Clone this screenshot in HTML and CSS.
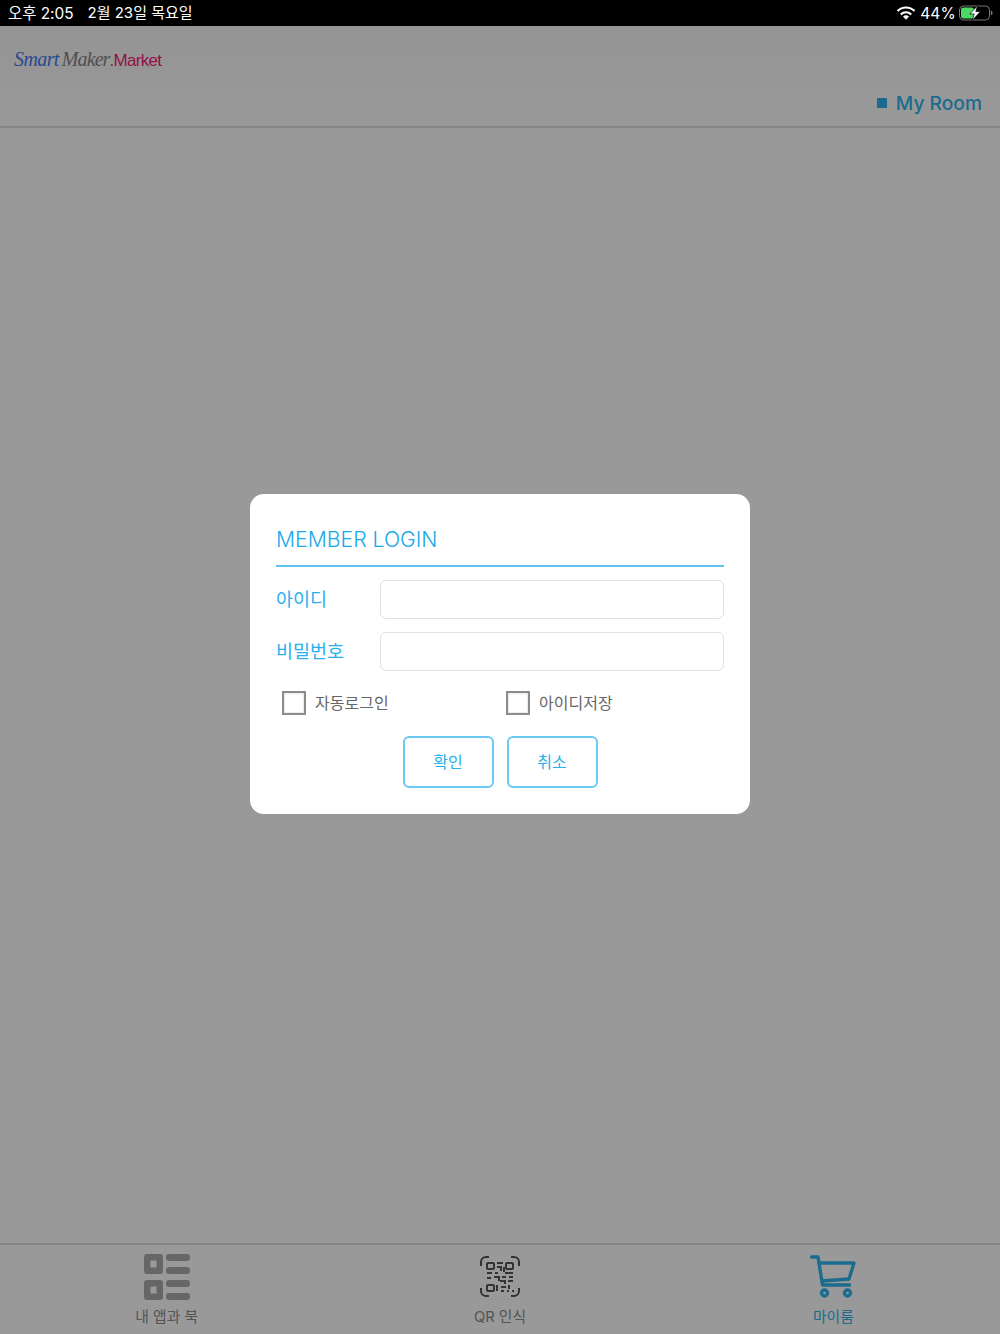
FILE: index.html
```html
<!DOCTYPE html>
<html lang="ko">
<head>
<meta charset="utf-8">
<title>Member Login</title>
<link rel="stylesheet" href="styles.css">
</head>
<body>
<div class="app">
  <div class="status">
    <div class="status-left"><span class="clock">오후 2:05</span><span>2월 23일 목요일</span></div>
    <div class="status-right">
      <svg class="wifi" width="20" height="14" viewBox="0 0 20 14"><path d="M10 13.800 7 10.600a4.300 4.300 0 0 1 6 0Z" fill="#fff"/><path d="M4.800 8.400a7.300 7.300 0 0 1 10.400 0" fill="none" stroke="#fff" stroke-width="2.100"/><path d="M1.500 5a12 12 0 0 1 17 0" fill="none" stroke="#fff" stroke-width="2.100"/></svg>
      <span class="pct">44%</span>
      <svg width="34" height="16" viewBox="0 0 34 16"><rect x=".5" y="1" width="30" height="14" rx="4" fill="none" stroke="#777"/><rect x="2" y="2.500" width="13" height="11" rx="2.500" fill="#4cd964"/><path d="M31.800 5.600c1.200.3 1.700 1.200 1.700 2.400s-.5 2.100-1.700 2.400Z" fill="#777"/><path d="M18.600 .6 10.800 9h4.400l-2 6.600L21.400 6.600h-4.600Z" fill="#fff" stroke="#000" stroke-width=".7"/></svg>
    </div>
  </div>
  <header class="header">
    <div class="logo"><span class="logo-smart">Smart</span><span class="logo-maker">Maker</span><span class="logo-market">.Market</span></div>
    <div class="myroom"><span class="square"></span><span>My Room</span></div>
  </header>
  <main class="content"></main>
  <nav class="tabbar">
    <div class="tab">
      <svg width="46" height="46" viewBox="0 0 46 46"><g fill="#ababab"><path fill-rule="evenodd" d="M3 0h13a3 3 0 0 1 3 3v14a3 3 0 0 1-3 3H3a3 3 0 0 1-3-3V3a3 3 0 0 1 3-3Zm3.500 6.500v7h6v-7Z"/><path fill-rule="evenodd" d="M3 26h13a3 3 0 0 1 3 3v14a3 3 0 0 1-3 3H3a3 3 0 0 1-3-3V29a3 3 0 0 1 3-3Zm3.500 6.500v7h6v-7Z"/><rect x="22" y="0" width="24" height="7" rx="3"/><rect x="22" y="13" width="24" height="7" rx="3"/><rect x="22" y="26" width="24" height="7" rx="3"/><rect x="22" y="39" width="24" height="7" rx="3"/></g></svg>
      <span class="tab-label">내 앱과 북</span>
    </div>
    <div class="tab">
      <svg width="46" height="46" viewBox="0 0 46 46"><g fill="none" stroke="#555" stroke-width="2"><path d="M4 12V8a5 5 0 0 1 5-5h3M34 3h3a5 5 0 0 1 5 5v4M42 34v3a5 5 0 0 1-5 5h-3M12 42H9a5 5 0 0 1-5-5v-3"/><rect x="10" y="9" width="7" height="6" rx="1"/><rect x="29" y="9" width="7" height="6" rx="1"/><rect x="10" y="31" width="7" height="6" rx="1"/><path d="M20 9h6M20 13h4v4M27 13v5M10 19h5M18 19h3M28 19h8M10 24h4M17 23h5v4M25 23h4M32 23h4M23 27h5v3M31 27h5M20 31v6M24 33h5M32 31v4M24 37h3M30 37h2M35 37h2"/></g></svg>
      <span class="tab-label">QR 인식</span>
    </div>
    <div class="tab tab-active">
      <svg width="46" height="46" viewBox="0 0 46 46"><g fill="none" stroke="#2db4ee" stroke-width="3.400" stroke-linecap="round" stroke-linejoin="round"><path d="M1.500 3H8l4.500 28h27"/><path d="M9.500 9H44l-5 16-27 2"/></g><g fill="none" stroke="#2db4ee" stroke-width="3.400"><circle cx="14.500" cy="39" r="3"/><circle cx="37.500" cy="39" r="3"/></g></svg>
      <span class="tab-label">마이룸</span>
    </div>
  </nav>
</div>
<div class="overlay">
  <form class="modal">
    <h1 class="modal-title">MEMBER LOGIN</h1>
    <div class="rows">
      <label class="row"><span class="row-label">아이디</span><input class="field" type="text"></label>
      <label class="row"><span class="row-label">비밀번호</span><input class="field" type="password"></label>
    </div>
    <div class="checks">
      <label class="check"><span class="box"></span><span>자동로그인</span></label>
      <label class="check"><span class="box"></span><span>아이디저장</span></label>
    </div>
    <div class="actions">
      <button class="btn" type="button">확인</button>
      <button class="btn" type="button">취소</button>
    </div>
  </form>
</div>
</body>
</html>
```
FILE: styles.css
```css
* { box-sizing: border-box; }
html, body { margin: 0; height: 100%; }
body {
  font-family: Inter, "Noto Sans CJK KR", sans-serif;
  background: #fff;
  overflow: hidden;
}
.app {
  height: 1334px;
  display: flex;
  flex-direction: column;
}
.status {
  height: 26px;
  flex: none;
  padding: 0 8px 3px;
  display: flex;
  align-items: center;
  justify-content: space-between;
  background: #000;
  color: #fff;
  font-size: 15px;
  position: relative;
  z-index: 2;
}
.status-left { display: flex; align-items: center; gap: 14px; }
.clock { font-size: 15.400px; }
.status-right {
  align-self: stretch;
  display: flex;
  align-items: center;
  gap: 5px;
  margin: 0 -1px -3px 0;
}
.wifi { margin-right: -1px; }
.pct { font-size: 15.500px; letter-spacing: .2px; margin-right: -2px; }
.header {
  height: 102px;
  flex: none;
  background: linear-gradient(#f8f8f8, #ffffff);
  border-bottom: 2px solid #e0e0e0;
  display: flex;
  flex-direction: column;
  justify-content: space-between;
  padding: 22px 18px 10px 14px;
}
.logo {
  display: flex;
  align-items: baseline;
  height: 27px;
}
.logo-smart {
  font-family: "Liberation Serif", serif;
  font-style: italic;
  color: #4678f0;
  font-size: 20px;
  letter-spacing: -.6px;
  margin-right: 3px;
}
.logo-maker {
  font-family: "Liberation Serif", serif;
  font-style: italic;
  color: #848484;
  font-size: 20px;
  letter-spacing: -.9px;
}
.logo-market {
  font-family: "Liberation Sans", sans-serif;
  color: #f51a78;
  font-size: 17px;
  letter-spacing: -.7px;
}
.myroom {
  align-self: flex-end;
  display: flex;
  align-items: center;
  gap: 9px;
  color: #2fb3ee;
  font-size: 19.200px;
  font-weight: 500;
  line-height: 26px;
}
.square { width: 10px; height: 10px; background: #2fb3ee; }
.content { flex: 1; background: #fff; }
.tabbar {
  height: 91px;
  flex: none;
  display: grid;
  grid-template-columns: repeat(3, 1fr);
  background: #fff;
  border-top: 2px solid #e0e0e0;
}
.tab {
  display: flex;
  flex-direction: column;
  align-items: center;
  padding-top: 9px;
  gap: 7px;
  color: #8c8c8c;
}
.tab-label { font-size: 14.800px; line-height: 20px; font-weight: 400; }
.tab-active { color: #2fb3ee; }
.overlay {
  position: absolute;
  inset: 26px 0 0 0;
  background: rgba(0, 0, 0, .4);
  display: flex;
  align-items: flex-start;
  justify-content: center;
  padding-top: 468px;
}
.modal {
  width: 500px;
  height: 320px;
  background: #fff;
  border-radius: 14px;
  padding: 29px 26px 0;
  margin: 0;
}
.modal-title {
  margin: 0;
  height: 44px;
  font-size: 21.200px;
  font-weight: 350;
  line-height: 33px;
  color: #1aa9eb;
  border-bottom: 2px solid #5cc3f1;
}
.rows {
  margin-top: 13px;
  display: flex;
  flex-direction: column;
  gap: 13px;
}
.row { display: flex; align-items: center; }
.row-label {
  width: 104px;
  flex: none;
  font-size: 18.500px;
  font-weight: 400;
  line-height: 38px;
  height: 39px;
  color: #29b0ec;
}
.field {
  flex: 1;
  min-width: 0;
  height: 39px;
  border: 1px solid #e0e0e0;
  border-radius: 6px;
  background: #fff;
  padding: 0 10px;
}
.checks {
  margin-top: 20px;
  padding-left: 6px;
  display: grid;
  grid-template-columns: 224px 1fr;
}
.check {
  display: flex;
  align-items: center;
  gap: 9px;
  font-size: 16px;
  line-height: 20px;
  font-weight: 400;
  color: #666;
}
.box {
  width: 24px;
  height: 24px;
  border: 2px solid #8c8c8c;
  box-shadow: inset 0 0 2px #bbb;
}
.actions {
  margin-top: 21px;
  display: flex;
  justify-content: center;
  gap: 13px;
}
.btn {
  width: 91px;
  height: 52px;
  border: 2px solid #6cc9f3;
  border-radius: 6px;
  background: #fff;
  color: #29b0ec;
  font-family: inherit;
  font-size: 16px;
  font-weight: 400;
  padding: 0 0 3px;
}
```
